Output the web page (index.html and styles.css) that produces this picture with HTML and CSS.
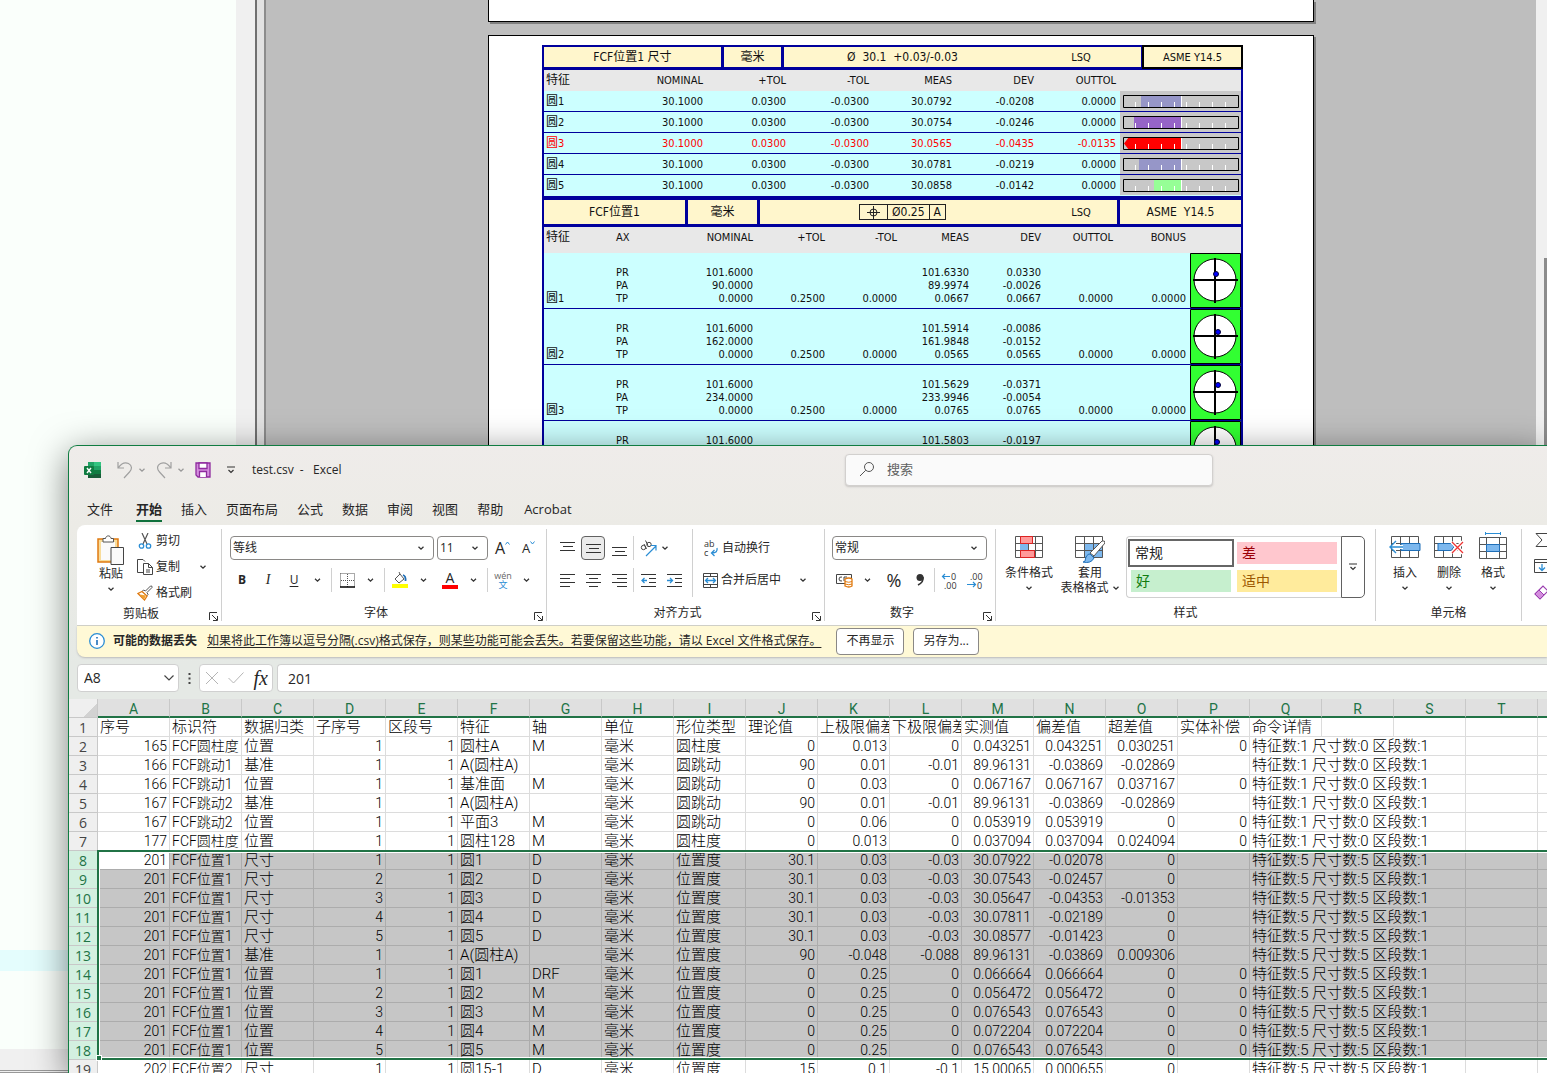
FILE: index.html
```html
<!DOCTYPE html>
<html lang="zh-CN">
<head>
<meta charset="utf-8">
<title>test.csv - Excel</title>
<link rel="stylesheet" href="styles.css">
</head>
<body>
<svg width="0" height="0" class="defs" aria-hidden="true">
  <symbol id="chev" viewBox="0 0 8 8"><path d="M1.5 2.8 4 5.2 6.500 2.800" fill="none" stroke="currentColor" stroke-width="1.3"/></symbol>
  <symbol id="ticks" viewBox="0 0 116 13"><path d="M12.500 7v5M25.500 7v5M38.500 7v5M51.500 7v5M58.500 0v12M63.500 7v5M76.500 7v5M89.500 7v5M102.500 7v5" stroke="#fff"/><path d="M.5.5h115v12H.5z" fill="none" stroke="#000"/></symbol>
  <symbol id="scope" viewBox="0 0 51 55"><path d="M.5.5h50v54H.5z" fill="#32ff32" stroke="#000"/><circle cx="25" cy="27" r="21" fill="#fff" stroke="#000"/><path d="M3 27h45M25 5v45" stroke="#000" stroke-width="2"/></symbol>
  <symbol id="launch" viewBox="0 0 9 9"><path d="M.5 8V.5H8M3 3l5 5M8.500 4v4.500H4" fill="none" stroke="#333"/></symbol>
</svg>

<main class="backdrop">
  <aside class="tree"><div class="tree-hit"></div><div class="tree-foot"></div></aside>
  <div class="gutter"></div>
  <section class="report">
    <div class="page page-prev"></div>
    <div class="page page-main">
      <div class="dim">
        <header class="title title-a"><h2>FCF位置1 尺寸</h2><span class="unit">毫米</span><div class="mid"><span class="spec">Ø&nbsp; 30.1&nbsp; +0.03/-0.03</span><span>LSQ</span></div><span class="std">ASME Y14.5</span></header>
        <table class="res res-a">
          <colgroup><col class="w80"><col class="w83"><col class="w83"><col class="w83"><col class="w83"><col class="w82"><col class="w82"><col class="w121"></colgroup>
          <thead><tr><th>特征<th>NOMINAL<th>+TOL<th>-TOL<th>MEAS<th>DEV<th>OUTTOL<th></thead>
          <tbody>
          <tr><td><i>圆</i>1<td>30.1000<td>0.0300<td>-0.0300<td>30.0792<td>-0.0208<td>0.0000<td><svg width="116" height="13"><path d="M18 0h40v13H18z" fill="#9696c8"/><use href="#ticks"/></svg>
          <tr><td><i>圆</i>2<td>30.1000<td>0.0300<td>-0.0300<td>30.0754<td>-0.0246<td>0.0000<td><svg width="116" height="13"><path d="M11 0h47v13H11z" fill="#9664c8"/><use href="#ticks"/></svg>
          <tr class="bad"><td><i>圆</i>3<td>30.1000<td>0.0300<td>-0.0300<td>30.0565<td>-0.0435<td>-0.0135<td><svg width="116" height="13"><path d="M1 6.500 6 0h52v13H6z" fill="#f00"/><use href="#ticks"/></svg>
          <tr><td><i>圆</i>4<td>30.1000<td>0.0300<td>-0.0300<td>30.0781<td>-0.0219<td>0.0000<td><svg width="116" height="13"><path d="M16 0h42v13H16z" fill="#9696c8"/><use href="#ticks"/></svg>
          <tr><td><i>圆</i>5<td>30.1000<td>0.0300<td>-0.0300<td>30.0858<td>-0.0142<td>0.0000<td><svg width="116" height="13"><path d="M31 0h27v13H31z" fill="#96ff96"/><use href="#ticks"/></svg>
          </tbody>
        </table>
        <header class="title title-b"><h2>FCF位置1</h2><span class="unit">毫米</span><div class="mid"><span class="frame"><b><svg width="13" height="13" viewBox="0 0 13 13"><path d="M0 6.500h13M6.500 0v13" stroke="#222"/><circle cx="6.500" cy="6.500" r="3.500" fill="none" stroke="#222"/></svg></b><b>Ø0.25</b><b>A</b></span><span>LSQ</span></div><span class="std">ASME&nbsp; Y14.5</span></header>
        <table class="res res-b">
          <colgroup><col class="w72"><col class="w70"><col class="w71"><col class="w72"><col class="w72"><col class="w72"><col class="w72"><col class="w72"><col class="w73"><col class="w51"></colgroup>
          <thead><tr><th>特征<th>AX<th>NOMINAL<th>+TOL<th>-TOL<th>MEAS<th>DEV<th>OUTTOL<th>BONUS<th></thead>
          <tbody>
          <tr><td><i>圆</i>1<td>PR<br>PA<br>TP<td>101.6000<br>90.0000<br>0.0000<td>0.2500<td>0.0000<td>101.6330<br>89.9974<br>0.0667<td>0.0330<br>-0.0026<br>0.0667<td>0.0000<td>0.0000<td><svg width="51" height="55"><use href="#scope"/><circle cx="26" cy="21" r="2.500" fill="#00f" stroke="#003"/></svg>
          <tr><td><i>圆</i>2<td>PR<br>PA<br>TP<td>101.6000<br>162.0000<br>0.0000<td>0.2500<td>0.0000<td>101.5914<br>161.9848<br>0.0565<td>-0.0086<br>-0.0152<br>0.0565<td>0.0000<td>0.0000<td><svg width="51" height="55"><use href="#scope"/><circle cx="28" cy="23" r="2.500" fill="#00f" stroke="#003"/></svg>
          <tr><td><i>圆</i>3<td>PR<br>PA<br>TP<td>101.6000<br>234.0000<br>0.0000<td>0.2500<td>0.0000<td>101.5629<br>233.9946<br>0.0765<td>-0.0371<br>-0.0054<br>0.0765<td>0.0000<td>0.0000<td><svg width="51" height="55"><use href="#scope"/><circle cx="28" cy="20" r="2.500" fill="#00f" stroke="#003"/></svg>
          <tr><td><i>圆</i>4<td>PR<br>PA<br>TP<td>101.6000<br>306.0000<br>0.0000<td>0.2500<td>0.0000<td>101.5803<br>306.0000<br>0.0722<td>-0.0197<br>0.0000<br>0.0722<td>0.0000<td>0.0000<td><svg width="51" height="55"><use href="#scope"/><circle cx="27" cy="21" r="2.500" fill="#00f" stroke="#003"/></svg>
          </tbody>
        </table>
      </div>
    </div>
  </section>
  <div class="rail"><div class="thumb"></div></div>
</main>

<section class="excel">
  <header class="bar">
    <div class="quick">
      <svg width="17" height="17" viewBox="0 0 17 17"><path d="M4 0h6v8H4z" fill="#21a366"/><path d="M10 0h7v4h-7z" fill="#33c481"/><path d="M10 4h7v4h-7z" fill="#21a366"/><path d="M4 8h6v8H4z" fill="#185c37"/><path d="M10 8h7v4h-7z" fill="#107c41"/><path d="M4 12h13v4H4z" fill="#185c37"/><rect y="4" width="10" height="9" rx="1" fill="#107c41"/><path d="m3 6 4 5M7 6l-4 5" stroke="#fff" stroke-width="1.400"/></svg>
      <button class="ic" aria-label="撤消"><svg width="16" height="18" viewBox="0 0 16 18"><path d="M1 1v6h6M1.500 6.500C4 3 8 1 11.500 2.500c4 2 3.500 6 1 8.500L7 17" fill="none" stroke="#a0a0a0" stroke-width="1.200"/></svg></button><svg class="c dim-c"><use href="#chev"/></svg>
      <button class="ic" aria-label="恢复"><svg width="16" height="18" viewBox="0 0 16 18"><path d="M15 1v6H9M14.500 6.500C12 3 8 1 4.500 2.500.5 4.500 1 8.500 3.500 11L9 17" fill="none" stroke="#a0a0a0" stroke-width="1.200"/></svg></button><svg class="c dim-c"><use href="#chev"/></svg>
      <button class="ic" aria-label="保存"><svg width="16" height="16" viewBox="0 0 16 16"><path d="M1 1h14v14H3l-2-2z" fill="#d48ede" stroke="#8e2a9e" stroke-width="1.300"/><path d="M4 1h8v5.500H4zM4.500 15V9.500h7V15" fill="#fff" stroke="#8e2a9e" stroke-width="1.300"/></svg></button>
      <button class="ic more" aria-label="自定义"><svg width="8" height="8" viewBox="0 0 8 8"><path d="M0 1h8M1.500 4 4 6.500 6.500 4" fill="none" stroke="#333" stroke-width="1.200"/></svg></button>
      <h1>test.csv&nbsp; -&nbsp;&nbsp; Excel</h1>
    </div>
    <label class="search"><svg width="16" height="16" viewBox="0 0 16 16"><circle cx="10" cy="6" r="4.500" fill="none" stroke="#555"/><path d="M6.800 9.200 1 15" stroke="#555"/></svg><input type="text" placeholder="搜索" aria-label="搜索"></label>
  </header>
  <nav class="tabs"><a href="#">文件</a><a href="#" class="on">开始</a><a href="#">插入</a><a href="#">页面布局</a><a href="#">公式</a><a href="#">数据</a><a href="#">审阅</a><a href="#">视图</a><a href="#">帮助</a><a href="#">Acrobat</a></nav>

  <div class="ribbon">
    <section class="group g-clip">
      <div class="body">
        <button class="big"><svg width="28" height="30" viewBox="0 0 28 30"><path d="M1 4h20v23H1z" fill="#f8dc9a" stroke="#e07a10" stroke-width="1.500"/><path d="M4 7h14v18H4z" fill="#fafafa"/><path d="M6 7V3.500h2.500c.5-3.500 5-3.500 5.500 0h2.500V7z" fill="#fff" stroke="#555"/><path d="M14 12.500h12.500v17H14z" fill="#fafafa" stroke="#444"/></svg><span>粘贴</span><svg class="c"><use href="#chev"/></svg></button>
        <div class="stack">
          <button class="row"><svg width="16" height="16" viewBox="0 0 16 16"><path d="m5 0 5 11M11 0 6 11" stroke="#555" stroke-width="1.200"/><circle cx="4.500" cy="13" r="2.200" fill="none" stroke="#2a8dd4" stroke-width="1.300"/><circle cx="11.500" cy="13" r="2.200" fill="none" stroke="#2a8dd4" stroke-width="1.300"/></svg>剪切</button>
          <button class="row"><svg width="16" height="16" viewBox="0 0 16 16"><path d="M6 13.500H.5V.5H6l2 2M6.500 4.500h5l4 4v7h-9zM11.500 4.500v4h4M9 11h4M9 13h4" fill="none" stroke="#444"/></svg>复制<svg class="c push"><use href="#chev"/></svg></button>
          <button class="row"><svg width="16" height="16" viewBox="0 0 16 16"><path d="m8.500 6 5-5q2-.5 1.500 1.500l-5 5 1 2-1.500 1.500-4.500-4.500L6.500 5z" fill="#fff" stroke="#555"/><path d="M5 6.500 1 8.500l6.500 6.500L10 11z" fill="#fff" stroke="#e07a10" stroke-width="1.300"/><path d="m3 9.500 6 1-2 4z" fill="#f0a030"/></svg>格式刷</button>
        </div>
      </div>
      <footer>剪贴板<svg class="l"><use href="#launch"/></svg></footer>
    </section>

    <section class="group g-font">
      <div class="body lines">
        <div class="tools t4"><span class="combo cw203"><select aria-label="字体"><option>等线</option></select><svg class="c"><use href="#chev"/></svg></span><span class="combo cw50"><select aria-label="字号"><option>11</option></select><svg class="c"><use href="#chev"/></svg></span><button class="ic grow">A<svg width="5" height="4" viewBox="0 0 5 4"><path d="M.5 3.500 2.500 1l2 2.500" fill="none" stroke="#2a8dd4"/></svg></button><button class="ic grow sm">A<svg width="5" height="4" viewBox="0 0 5 4"><path d="M.5.5l2 2.500 2-2.500" fill="none" stroke="#2a8dd4"/></svg></button></div>
        <div class="tools"><button class="ic"><b>B</b></button><button class="ic"><em>I</em></button><button class="ic"><u>U</u></button><svg class="c wide"><use href="#chev"/></svg><s></s>
          <button class="ic" aria-label="边框"><svg width="15" height="15" viewBox="0 0 15 15"><path d="M.5.5h14v14M.5.5v14M7.500 1v13M1 7.500h13" fill="none" stroke="#555" stroke-dasharray="1 1"/><path d="M0 14h15" stroke="#000" stroke-width="1.500"/></svg></button><svg class="c wide"><use href="#chev"/></svg><s></s>
          <button class="ic" aria-label="填充颜色"><svg width="16" height="16" viewBox="0 0 16 16"><path d="m3 7 5-5 4 5-5 4zM8 2 7 0" fill="#fff" stroke="#555"/><path d="M11 3q3 1 2.500 6" fill="none" stroke="#1f6fb8" stroke-width="1.800"/><path d="M0 12h16v4H0z" fill="#ff0"/></svg></button><svg class="c wide"><use href="#chev"/></svg>
          <button class="ic nudge" aria-label="字体颜色"><span class="fc">A</span></button><svg class="c wide"><use href="#chev"/></svg><s></s>
          <button class="ic wen"><span>wén</span><span>文</span></button><svg class="c wide"><use href="#chev"/></svg></div>
      </div>
      <footer>字体<svg class="l"><use href="#launch"/></svg></footer>
    </section>

    <section class="group g-align">
      <div class="body">
        <div class="lines left">
          <div class="tools"><button class="ic" aria-label="顶端对齐"><svg width="15" height="15" viewBox="0 0 15 15"><path d="M0 1.500h15M3 5.500h10M0 9.500h15" stroke="#333"/></svg></button><button class="ic pressed" aria-label="垂直居中"><svg width="15" height="15" viewBox="0 0 15 15"><path d="M0 3.500h15M3 7.500h10M0 11.500h15" stroke="#333"/></svg></button><button class="ic" aria-label="底端对齐"><svg width="15" height="15" viewBox="0 0 15 15"><path d="M0 6.500h15M3 10.500h10M0 14.500h15" stroke="#333"/></svg></button><s class="tight"></s><button class="ic" aria-label="方向"><svg width="17" height="17" viewBox="0 0 17 17"><circle cx="3.500" cy="7.500" r="2.200" fill="none" stroke="#444"/><circle cx="9" cy="4.500" r="2.200" fill="none" stroke="#444"/><path d="m4 4 2.500 5M5.500.5l2.500 5" fill="none" stroke="#444"/><path d="m6 16 10-10M11 5.500h5v5" fill="none" stroke="#2a8dd4" stroke-width="1.200"/></svg></button><svg class="c"><use href="#chev"/></svg></div>
          <div class="tools"><button class="ic" aria-label="左对齐"><svg width="15" height="15" viewBox="0 0 15 15"><path d="M0 1.500h15M0 5.500h10M0 9.500h15M0 13.500h10" stroke="#333"/></svg></button><button class="ic" aria-label="居中"><svg width="15" height="15" viewBox="0 0 15 15"><path d="M0 1.500h15M3 5.500h9M0 9.500h15M3 13.500h9" stroke="#333"/></svg></button><button class="ic" aria-label="右对齐"><svg width="15" height="15" viewBox="0 0 15 15"><path d="M0 1.500h15M5 5.500h10M0 9.500h15M5 13.500h10" stroke="#333"/></svg></button><s class="tight"></s><button class="ic" aria-label="减少缩进"><svg width="15" height="15" viewBox="0 0 15 15"><path d="M0 1.500h15M8 5.500h7M8 9.500h7M0 13.500h15" stroke="#333"/><path d="M6 7.500H1M3.500 5 1 7.500 3.500 10" fill="none" stroke="#2a8dd4" stroke-width="1.300"/></svg></button><button class="ic" aria-label="增加缩进"><svg width="15" height="15" viewBox="0 0 15 15"><path d="M0 1.500h15M8 5.500h7M8 9.500h7M0 13.500h15" stroke="#333"/><path d="M0 7.500h5M3 5l2.500 2.500L3 10" fill="none" stroke="#2a8dd4" stroke-width="1.300"/></svg></button></div>
        </div>
        <div class="lines right">
          <div class="tools"><button class="row"><svg width="16" height="18" viewBox="0 0 16 18"><text x="1" y="8" class="tiny">ab</text><text x="1" y="17" class="tiny">c</text><path d="M14 9q1 5-5 5M11.500 11 8.500 14l3 3" fill="none" stroke="#2a8dd4" stroke-width="1.300"/></svg>自动换行</button></div>
          <div class="tools"><button class="row"><svg width="15" height="15" viewBox="0 0 15 15"><path d="M.5.5h14v14H.5zM.5 3.500h14M.5 11.500h14M7.500.5v3M7.500 11.500v3" fill="none" stroke="#444"/><path d="M2.500 7.500h10M5 5 2.500 7.500 5 10M10 5l2.500 2.500L10 10" fill="none" stroke="#2a8dd4" stroke-width="1.300"/></svg>合并后居中</button><svg class="c far"><use href="#chev"/></svg></div>
        </div>
      </div>
      <footer>对齐方式<svg class="l"><use href="#launch"/></svg></footer>
    </section>

    <section class="group g-num">
      <div class="body lines">
        <div class="tools"><span class="combo cw154"><select aria-label="数字格式"><option>常规</option></select><svg class="c"><use href="#chev"/></svg></span></div>
        <div class="tools"><button class="ic" aria-label="会计格式"><svg width="17" height="15" viewBox="0 0 17 15"><path d="M.5 1.500h15v9H.5z" fill="#fff" stroke="#444"/><path d="M6 4Q3 3.500 3 6t3 2M8 8V4h3" fill="none" stroke="#444"/><path d="M9 6q4-2 7 0v7q-3 2-7 0z" fill="#fff" stroke="#e07a10" stroke-width="1.300"/><path d="M9 8.500q4 1.500 7 0M9 11q4 1.500 7 0" fill="none" stroke="#e07a10"/></svg></button><svg class="c wide"><use href="#chev"/></svg><button class="ic nudge pct">%</button><button class="ic" aria-label="千位分隔"><svg width="9" height="14" viewBox="0 0 9 14"><circle cx="4" cy="4.500" r="3.500" fill="#333"/><path d="M7 4q1 5-5 8" fill="none" stroke="#333" stroke-width="1.600"/></svg></button><s class="tight"></s><button class="ic" aria-label="增加小数位数"><svg width="17" height="17" viewBox="0 0 17 17"><text x="10" y="8" class="tiny">0</text><text x="3" y="17" class="tiny">.00</text><path d="M9 4.500H1.500M4 2 1.500 4.500 4 7" fill="none" stroke="#2a8dd4" stroke-width="1.200"/></svg></button><button class="ic" aria-label="减少小数位数"><svg width="17" height="17" viewBox="0 0 17 17"><text x="3" y="8" class="tiny">.00</text><text x="10" y="17" class="tiny">0</text><path d="M0 12.500h8.500M6 10l2.500 2.500L6 15" fill="none" stroke="#2a8dd4" stroke-width="1.200"/></svg></button></div>
      </div>
      <footer>数字<svg class="l"><use href="#launch"/></svg></footer>
    </section>

    <section class="group g-style">
      <div class="body">
        <button class="big"><svg width="28" height="23" viewBox="0 0 28 23"><path d="M.5.5h27v21H.5zM.5 7.500h27M.5 14.500h27M5.500 0v22M13.500 0v22M20.500 0v22" fill="none" stroke="#555"/><path d="M5.500.5h12v7h-12zM5.500 14.500h14v7h-14z" fill="#ff9a9a" stroke="#d22"/><path d="M5 8h8v6H5z" fill="#7db8ee"/></svg><span>条件格式</span><svg class="c"><use href="#chev"/></svg></button>
        <button class="big"><svg width="30" height="27" viewBox="0 0 30 27"><path d="M9 7.500h19v14H9z" fill="#7db8ee"/><path d="M.5.5h27v21H.5zM.5 7.500h27M.5 14.500h27M9.500 0v22M18.500 0v22" fill="none" stroke="#555"/><path d="M27 5q3-1 3 2L19 20l-4-3z" fill="#fff" stroke="#555"/><path d="M15 18q-4 0-5 7-1 1-2 1 8 2 11-4z" fill="#7db8ee" stroke="#1f6fb8"/></svg><span>套用</span><span class="two">表格格式<svg class="c"><use href="#chev"/></svg></span></button>
        <div class="gallery"><div class="chips"><button class="chip normal">常规</button><button class="chip poor">差</button><button class="chip good">好</button><button class="chip mild">适中</button></div><button class="drop" aria-label="其他"><svg width="8" height="8" viewBox="0 0 8 8"><path d="M0 1h8M1.500 4 4 6.500 6.500 4" fill="none" stroke="#333" stroke-width="1.200"/></svg></button></div>
      </div>
      <footer>样式</footer>
    </section>

    <section class="group g-cells">
      <div class="body">
        <button class="big"><svg width="32" height="23" viewBox="0 0 32 23"><path d="M2.500.5h27v21h-27zM2.500 7.500h27M2.500 14.500h27M11.500 0v22M20.500 0v22" fill="none" stroke="#555"/><path d="M12 7.500h19v7H12z" fill="#7db8ee" stroke="#1f6fb8"/><path d="M14 9v4H7v3l-6-5 6-6v4z" fill="#fff"/><path d="M14 11H1M7 5 1 11l6 6" fill="none" stroke="#2a8dd4" stroke-width="1.400"/></svg><span>插入</span><svg class="c"><use href="#chev"/></svg></button>
        <button class="big"><svg width="30" height="23" viewBox="0 0 30 23"><path d="M.5.5h27v21H.5zM.5 7.500h27M.5 14.500h27M9.500 0v22M18.500 0v22" fill="none" stroke="#555"/><path d="M4 7.500h13l3 3.500-3 3.500H4z" fill="#7db8ee" stroke="#1f6fb8"/><path d="m18 6 11 11M29 6 18 17" stroke="#fff" stroke-width="4"/><path d="m18 6 11 11M29 6 18 17" stroke="#e33" stroke-width="1.300"/></svg><span>删除</span><svg class="c"><use href="#chev"/></svg></button>
        <button class="big fmt"><svg width="28" height="28" viewBox="0 0 28 28"><path d="M6 1.500h16M6.500 0v3M21.500 0v3" stroke="#2a8dd4"/><path d="M.5 5.500h27v21H.5zM.5 12.500h27M.5 19.500h27M7.500 5v22M20.500 5v22" fill="none" stroke="#555"/><path d="M7.500 12.500h13v7h-13z" fill="#7db8ee" stroke="#1f6fb8"/></svg><span>格式</span><svg class="c"><use href="#chev"/></svg></button>
      </div>
      <footer>单元格</footer>
    </section>

    <section class="group g-edit">
      <div class="stack">
        <button class="row" aria-label="自动求和"><svg width="16" height="16" viewBox="0 0 16 16"><path d="M14 4V1.500H2L8 8l-6 6.500h12V12" fill="none" stroke="#444"/></svg></button>
        <button class="row" aria-label="填充"><svg width="16" height="16" viewBox="0 0 16 16"><path d="M.5 1.500h15v13H.5zM.5 4.500h15" fill="none" stroke="#444"/><path d="M8 6v6M5 9.500l3 3 3-3" fill="none" stroke="#2a8dd4" stroke-width="1.300"/></svg></button>
        <button class="row" aria-label="清除"><svg width="16" height="16" viewBox="0 0 16 16"><path d="m1 10 8-8 5 5-8 8z" fill="#fff" stroke="#9b3fb0" stroke-width="1.200"/><path d="m1 10 4-4 5 5-4 4z" fill="#d48ede" stroke="#9b3fb0"/></svg></button>
      </div>
    </section>
  </div>

  <div class="notice"><svg width="16" height="16" viewBox="0 0 16 16"><circle cx="8" cy="8" r="7.300" fill="#fff" stroke="#2a8dd4" stroke-width="1.300"/><path d="M8 7v5M8 4v1.500" stroke="#1f6fb8" stroke-width="1.600"/></svg><strong>可能的数据丢失</strong><a href="#">如果将此工作簿以逗号分隔(.csv)格式保存，则某些功能可能会丢失。若要保留这些功能，请以 Excel 文件格式保存。</a><button>不再显示</button><button>另存为...</button></div>

  <div class="formula">
    <label class="name"><input type="text" value="A8" aria-label="名称框"><svg width="10" height="6" viewBox="0 0 10 6"><path d="m.5.5 4.500 4.500L9.500.5" fill="none" stroke="#444" stroke-width="1.200"/></svg></label>
    <svg width="3" height="11" viewBox="0 0 3 11"><path d="M.5 0h2v2h-2zM.5 4.500h2v2h-2zM.5 9h2v2h-2z" fill="#444"/></svg>
    <div class="fx"><svg width="12" height="12" viewBox="0 0 12 12"><path d="m0 0 12 12M12 0 0 12" stroke="#b5b5b5"/></svg><svg width="16" height="12" viewBox="0 0 16 12"><path d="m.5 6 5 5L15.500.5" fill="none" stroke="#b5b5b5"/></svg><em>fx</em></div>
    <input class="entry" type="text" value="201" aria-label="编辑栏">
  </div>

  <div class="sheet">
    <table>
      <thead><tr><th class="corner"><th>A<th>B<th>C<th>D<th>E<th>F<th>G<th>H<th>I<th>J<th>K<th>L<th>M<th>N<th>O<th>P<th>Q<th>R<th>S<th>T<th></thead>
      <tbody class="names">
      <tr><th>1<td>序号<td>标识符<td>数据归类<td>子序号<td>区段号<td>特征<td>轴<td>单位<td>形位类型<td>理论值<td>上极限偏差<td>下极限偏差<td>实测值<td>偏差值<td>超差值<td>实体补偿<td>命令详情<td><td><td><td>
      </tbody>
      <tbody class="data">
      <tr><th>2<td>165<td>FCF圆柱度<td>位置<td>1<td>1<td>圆柱A<td>M<td>毫米<td>圆柱度<td>0<td>0.013<td>0<td>0.043251<td>0.043251<td>0.030251<td>0<td colspan="3">特征数:1 尺寸数:0 区段数:1<td><td>
      <tr><th>3<td>166<td>FCF跳动1<td>基准<td>1<td>1<td>A(圆柱A)<td><td>毫米<td>圆跳动<td>90<td>0.01<td>-0.01<td>89.96131<td>-0.03869<td>-0.02869<td><td colspan="3">特征数:1 尺寸数:0 区段数:1<td><td>
      <tr><th>4<td>166<td>FCF跳动1<td>位置<td>1<td>1<td>基准面<td>M<td>毫米<td>圆跳动<td>0<td>0.03<td>0<td>0.067167<td>0.067167<td>0.037167<td>0<td colspan="3">特征数:1 尺寸数:0 区段数:1<td><td>
      <tr><th>5<td>167<td>FCF跳动2<td>基准<td>1<td>1<td>A(圆柱A)<td><td>毫米<td>圆跳动<td>90<td>0.01<td>-0.01<td>89.96131<td>-0.03869<td>-0.02869<td><td colspan="3">特征数:1 尺寸数:0 区段数:1<td><td>
      <tr><th>6<td>167<td>FCF跳动2<td>位置<td>1<td>1<td>平面3<td>M<td>毫米<td>圆跳动<td>0<td>0.06<td>0<td>0.053919<td>0.053919<td>0<td>0<td colspan="3">特征数:1 尺寸数:0 区段数:1<td><td>
      <tr><th>7<td>177<td>FCF圆柱度<td>位置<td>1<td>1<td>圆柱128<td>M<td>毫米<td>圆柱度<td>0<td>0.013<td>0<td>0.037094<td>0.037094<td>0.024094<td>0<td colspan="3">特征数:1 尺寸数:0 区段数:1<td><td>
      </tbody>
      <tbody class="data sel">
      <tr><th>8<td class="active">201<td>FCF位置1<td>尺寸<td>1<td>1<td>圆1<td>D<td>毫米<td>位置度<td>30.1<td>0.03<td>-0.03<td>30.07922<td>-0.02078<td>0<td><td colspan="3">特征数:5 尺寸数:5 区段数:1<td><td>
      <tr><th>9<td>201<td>FCF位置1<td>尺寸<td>2<td>1<td>圆2<td>D<td>毫米<td>位置度<td>30.1<td>0.03<td>-0.03<td>30.07543<td>-0.02457<td>0<td><td colspan="3">特征数:5 尺寸数:5 区段数:1<td><td>
      <tr><th>10<td>201<td>FCF位置1<td>尺寸<td>3<td>1<td>圆3<td>D<td>毫米<td>位置度<td>30.1<td>0.03<td>-0.03<td>30.05647<td>-0.04353<td>-0.01353<td><td colspan="3">特征数:5 尺寸数:5 区段数:1<td><td>
      <tr><th>11<td>201<td>FCF位置1<td>尺寸<td>4<td>1<td>圆4<td>D<td>毫米<td>位置度<td>30.1<td>0.03<td>-0.03<td>30.07811<td>-0.02189<td>0<td><td colspan="3">特征数:5 尺寸数:5 区段数:1<td><td>
      <tr><th>12<td>201<td>FCF位置1<td>尺寸<td>5<td>1<td>圆5<td>D<td>毫米<td>位置度<td>30.1<td>0.03<td>-0.03<td>30.08577<td>-0.01423<td>0<td><td colspan="3">特征数:5 尺寸数:5 区段数:1<td><td>
      <tr><th>13<td>201<td>FCF位置1<td>基准<td>1<td>1<td>A(圆柱A)<td><td>毫米<td>位置度<td>90<td>-0.048<td>-0.088<td>89.96131<td>-0.03869<td>0.009306<td><td colspan="3">特征数:5 尺寸数:5 区段数:1<td><td>
      <tr><th>14<td>201<td>FCF位置1<td>位置<td>1<td>1<td>圆1<td>DRF<td>毫米<td>位置度<td>0<td>0.25<td>0<td>0.066664<td>0.066664<td>0<td>0<td colspan="3">特征数:5 尺寸数:5 区段数:1<td><td>
      <tr><th>15<td>201<td>FCF位置1<td>位置<td>2<td>1<td>圆2<td>M<td>毫米<td>位置度<td>0<td>0.25<td>0<td>0.056472<td>0.056472<td>0<td>0<td colspan="3">特征数:5 尺寸数:5 区段数:1<td><td>
      <tr><th>16<td>201<td>FCF位置1<td>位置<td>3<td>1<td>圆3<td>M<td>毫米<td>位置度<td>0<td>0.25<td>0<td>0.076543<td>0.076543<td>0<td>0<td colspan="3">特征数:5 尺寸数:5 区段数:1<td><td>
      <tr><th>17<td>201<td>FCF位置1<td>位置<td>4<td>1<td>圆4<td>M<td>毫米<td>位置度<td>0<td>0.25<td>0<td>0.072204<td>0.072204<td>0<td>0<td colspan="3">特征数:5 尺寸数:5 区段数:1<td><td>
      <tr><th>18<td>201<td>FCF位置1<td>位置<td>5<td>1<td>圆5<td>M<td>毫米<td>位置度<td>0<td>0.25<td>0<td>0.076543<td>0.076543<td>0<td>0<td colspan="3">特征数:5 尺寸数:5 区段数:1<td><td>
      </tbody>
      <tbody class="data">
      <tr><th>19<td>202<td>FCF位置2<td>尺寸<td>1<td>1<td>圆15-1<td>D<td>毫米<td>位置度<td>15<td>0.1<td>-0.1<td>15.00065<td>0.000655<td>0<td><td colspan="3">特征数:5 尺寸数:5 区段数:1<td><td>
      </tbody>
    </table>
    <div class="marquee"><div class="handle"></div></div>
  </div>
</section>
</body>
</html>
```
FILE: styles.css
```css
* { box-sizing: border-box; }
body { margin: 0; height: 100vh; overflow: hidden; position: relative; font: 12px/16px "Open Sans", "Noto Sans CJK SC", sans-serif; color: #262626; }
.defs { position: absolute; }
svg { display: block; flex: none; }
button, input, select { font: inherit; color: inherit; margin: 0; }
button { background: none; border: 0; padding: 0; }
h1, h2 { margin: 0; font-size: inherit; font-weight: 400; }

/* measuring program behind the workbook */
.backdrop { display: flex; height: 100%; background: #bebebe; }
.tree { flex: 0 0 236px; background: #fafffb; display: flex; flex-direction: column; justify-content: flex-end; }
.tree-hit { height: 21px; background: #e4fdfd; margin-bottom: 78px; }
.tree-foot { height: 24px; background: #f0f0f0; border-bottom: 3px double #999; }
.gutter { flex: 0 0 30px; background: #f0f0f0; border-right: 2px solid #8c8c8c; display: flex; justify-content: flex-end; }
.gutter::before { content: ""; width: 7px; border-left: 2px solid #707070; background: #e2e2e2; }
.report { flex: 1; min-width: 0; display: flex; flex-direction: column; align-items: center; overflow: hidden; }
.rail { flex: 0 0 11px; background: #f0f0f0; display: flex; align-items: flex-end; justify-content: flex-end; }
.thumb { width: 3px; height: 76%; background: #8c8c8c; }
.page { flex: none; width: 826px; background: #fff; border: 1px solid #000; box-shadow: 2px 2px 0 #808080; }
.page-prev { height: 22px; border-top: 0; margin-bottom: 13px; }
.page-main { padding: 9px 70px 600px 53px; }
.dim { border: 2px solid #00009c; font: 11px/13px "DejaVu Sans Condensed", "Noto Sans CJK SC", sans-serif; color: #111; }
.title { display: flex; gap: 3px; background: #00009c; text-align: center; border-bottom: 3px solid #00009c; }
.title > * { background: #fff6cc; display: flex; align-items: center; justify-content: center; }
.title h2, .unit { font-size: 12px; }
.title .mid { flex: 1; display: grid; justify-items: center; }
.title-a { height: 23px; }
.title-a h2 { width: 177px; }
.title-a .unit { width: 57px; }
.title-a .mid { grid-template-columns: 237px 1fr; }
.title-a .std { width: 97px; outline: 2px solid #000; }
.spec { font-size: 12px; }
.title-b { height: 31px; border-top: 4px solid #00009c; }
.title-b h2 { width: 141px; }
.title-b .unit { width: 69px; }
.title-b .mid { grid-template-columns: 285px 1fr; }
.title-b .std { width: 121px; font-size: 12px; }
.frame { display: flex; border: 1px solid #222; height: 16px; font-size: 12px; }
.frame b { font-weight: 400; padding: 0 4px; border-right: 1px solid #222; display: flex; align-items: center; }
.frame b:first-child { padding: 0 7px; }
.frame b:last-child { border: 0; }
.res { table-layout: fixed; width: 100%; border-collapse: separate; border-spacing: 0; }
.res th { font-weight: 400; background: #e8e8e8; vertical-align: top; }
.res th, .res td { text-align: right; padding: 0 4px 0 0; white-space: nowrap; }
.res th:first-child, .res td:first-child { text-align: left; padding-left: 2px; }
.res th:first-child { font-size: 12px; }
.res td { background: #ccffff; border-bottom: 1px solid #00009c; vertical-align: bottom; }
.res tbody tr:last-child td { border-bottom-color: #ccffff; }
.res i { font-style: normal; font-size: 12px; }
.res-a th { height: 21px; padding-top: 4px; }
.res-a td { height: 21px; padding-bottom: 3px; }
.res-a td:last-child { background: #c8c8c8; vertical-align: middle; padding: 0 0 0 3px; }
.bad { color: #f00; }
.res-b th { height: 26px; padding-top: 4px; }
.res-b td { height: 56px; padding-bottom: 3px; }
.res-b th:nth-child(2), .res-b td:nth-child(2) { text-align: left; }
.res-b td:last-child { padding: 0; }
.w51 { width: 51px; } .w70 { width: 70px; } .w71 { width: 71px; } .w72 { width: 72px; } .w73 { width: 73px; }
.w80 { width: 80px; } .w82 { width: 82px; } .w83 { width: 83px; } .w121 { width: 121px; }

/* workbook window */
.excel { position: absolute; left: 68px; right: 0; top: 445px; bottom: 0; display: flex; flex-direction: column; overflow: hidden; border: 1px solid #107c41; border-width: 1px 0 0 1px; border-radius: 9px 0 0 0; background: linear-gradient(#efecea, #ecebe6 80px, #e5e9e5 220px); box-shadow: 0 8px 36px rgba(0, 0, 0, .5); }
.bar { flex: none; display: flex; height: 48px; padding-top: 8px; }
.quick { flex: 0 0 776px; height: 32px; display: flex; align-items: center; padding-left: 15px; }
.quick .ic { margin-left: 5px; }
.quick > svg:first-child { margin-right: 6px; }
.quick .more { margin: 0 8px 0 2px; }
.quick h1 { font-size: 12px; }
.search { flex: 0 1 368px; height: 32px; display: flex; align-items: center; gap: 12px; padding: 0 13px 2px; background: #fafafa; border: 1px solid #d2d0ce; border-radius: 4px; box-shadow: 0 1px 2px #c8c6c4; }
.search input { border: 0; background: none; outline: 0; flex: 1; min-width: 0; padding: 0; font-size: 13px; }
.search input::placeholder { color: #616161; opacity: 1; }
.tabs { flex: none; display: flex; gap: 19px; height: 31px; padding: 5px 0 0 18px; font-size: 13px; line-height: 20px; }
.tabs a { color: inherit; text-decoration: none; white-space: nowrap; height: 23px; }
.tabs a:nth-child(2) { margin-left: 4px; }
.tabs a:last-child { margin-left: 2px; }
.tabs .on { font-weight: 700; border-bottom: 2px solid #0f703b; }
.ribbon { flex: none; display: flex; height: 101px; margin-left: 8px; background: #fff; border-radius: 8px 0 0 0; border-bottom: 1px solid #d0d0c8; overflow: hidden; }
.group { flex: none; display: flex; flex-direction: column; margin: 4px 0; position: relative; border-right: 1px solid #d0d0d0; }
.body { display: flex; height: 78px; }
.group footer { display: flex; justify-content: center; line-height: 16px; padding-right: 16px; }
.g-style footer, .g-cells footer { padding-right: 0; }
.l { width: 9px; height: 9px; position: absolute; right: 3px; bottom: 0; }
.g-clip { width: 145px; } .g-font { width: 325px; } .g-align { width: 278px; } .g-num { width: 171px; }
.g-style { width: 380px; } .g-cells { width: 146px; } .g-edit { width: 60px; padding-left: 12px; }
.g-clip .body { padding-left: 12px; }
.g-style .body { padding-left: 1px; }
.g-cells .body { padding-left: 7px; }
.c { width: 8px; height: 8px; color: #333; }
.c.wide { width: 21px; }
.c.far { margin-left: 18px; }
.dim-c { color: #999; }
.big { display: flex; flex-direction: column; align-items: center; width: 44px; padding-top: 6px; white-space: nowrap; }
.big > svg:first-child { height: 30px; margin-bottom: 1px; }
.g-style .big { width: 64px; }
.g-style .big + .big { width: 58px; }
.big > svg[height="23"]:first-child { height: 23px; margin: 1px 0 6px; }
.big > svg[height="27"]:first-child { height: 27px; margin: 1px 0 2px; }
.big > svg[height="28"]:first-child { height: 28px; margin: -3px 0 5px; }
.big .c { margin-top: 3px; }
.two { display: flex; gap: 3px; line-height: 14px; }
.stack { display: flex; flex-direction: column; margin: -1px 0 0 4px; }
.g-edit .stack { margin: -2px 0 0; }
.stack .row { height: 26px; }
.g-clip .stack { width: 70px; }
.row { display: flex; align-items: center; gap: 3px; white-space: nowrap; }
.row .push { margin-left: auto; }
.lines { flex-direction: column; display: flex; padding: 4px 0 0 7px; gap: 2px; }
.tools { display: flex; align-items: center; height: 30px; }
.t4 { gap: 3px; }
.ic { width: 26px; height: 24px; display: flex; align-items: center; justify-content: center; flex: none; }
.ic b { font-weight: 700; } .ic em { font-family: "Liberation Serif", serif; font-size: 14px; }
.ic u { text-underline-offset: 2px; }
.nudge { margin-left: 3px; }
.pct { font-size: 18px; }
.pressed { border: 1px solid #616161; border-radius: 4px; background: #ebebeb; width: 24px; margin: 0 1px; }
s { width: 6px; height: 24px; background: linear-gradient(#d0d0d0, #d0d0d0) center / 1px 100% no-repeat; }
s.tight { width: 3px; }
.grow { font-size: 16px; align-items: center; width: 23px; }
.grow svg { margin-bottom: 10px; }
.grow.sm { font-size: 13px; }
.fc { font-size: 14px; line-height: 14px; border-bottom: 4px solid #f00; width: 16px; }
.wen { flex-direction: column; font-size: 9px; line-height: 9px; color: #666; }
.wen span + span { color: #2a8dd4; }
.tiny { font: 9px "Open Sans", sans-serif; fill: #333; }
.combo { display: flex; align-items: center; border: 1px solid #8a8886; border-radius: 4px; height: 24px; padding: 0 8px 0 2px; background: #fff; }
.combo select { appearance: none; border: 0; background: none; flex: 1; min-width: 0; padding: 0; outline: 0; }
.cw203 { width: 204px; margin-left: 1px; } .cw50 { width: 51px; } .cw154 { width: 155px; margin-left: 1px; }
.g-num .lines { padding-left: 6px; }
.g-align .left { width: 146px; border-right: 1px solid #d0d0d0; height: 68px; }
.g-align .right { padding-left: 10px; }
.gallery { display: flex; margin-top: 7px; margin-left: 7px; height: 62px; }
.chips { display: grid; grid-template-columns: 106px 100px; gap: 4px 3px; align-content: start; padding: 2px 4px 0 1px; border: 1px solid #d0d0d0; border-right: 0; border-radius: 4px 0 0 4px; }
.chip { font-size: 14px; line-height: 18px; text-align: left; padding: 0 5px; height: 22px; margin: 3px 0 0; }
.chip.normal { border: 2px solid #666; height: 28px; margin: 0 0 -3px; }
.chip.poor { background: #ffc7ce; color: #9c0006; }
.chip.good { background: #c6efce; color: #107c10; margin: 2px 3px 0; }
.chip.mild { background: #ffeb9c; color: #9c5700; margin-top: 2px; }
.drop { width: 24px; border: 1px solid #616161; border-radius: 0 5px 5px 0; display: flex; align-items: center; justify-content: center; }

.notice { flex: none; display: flex; align-items: center; height: 31px; margin-left: 8px; padding: 0 0 1px 12px; background: #fff9d6; border-radius: 0 0 0 8px; box-shadow: 0 1px 2px #bbb; white-space: nowrap; }
.notice strong { margin: 0 10px 0 8px; }
.notice a { color: inherit; text-underline-offset: 2px; margin-right: 15px; }
.notice button { border: 1px solid #8a8886; border-radius: 4px; background: #fff; height: 27px; padding: 0 9px; margin-right: 9px; }
.formula { flex: none; display: flex; align-items: center; height: 42px; padding: 0 0 0 8px; font-size: 14px; }
.name, .fx, .entry { height: 28px; background: #fff; border: 1px solid #d0d0d0; border-radius: 4px; display: flex; align-items: center; }
.name { width: 102px; padding: 0 4px 0 6px; margin-right: 9px; }
.name input { flex: 1; min-width: 0; border: 0; padding: 0; background: none; outline: 0; }
.fx { width: 74px; margin: 0 4px 0 8px; padding: 0 4px 0 6px; justify-content: space-between; }
.fx em { font: italic 20px/20px "Liberation Serif", serif; }
.entry { flex: 1; min-width: 0; border-right: 0; border-radius: 4px 0 0 4px; padding: 0 0 0 10px; outline: 0; }

.sheet { flex: 1; position: relative; overflow: hidden; background: #fff; font: 300 15px/17px Roboto, "Noto Sans CJK SC", sans-serif; color: #000; }
.sheet table { table-layout: fixed; width: 1541px; border-collapse: separate; border-spacing: 0; }
.sheet th { font: 14px/17px "Open Sans", sans-serif; color: #444; background: #efefef; border: 1px solid #c8c8c8; border-width: 0 1px 1px 0; height: 19px; padding: 1px 0 0; }
.sheet thead th { width: 72px; background: #e0e0e0; color: #217346; border-bottom: 2px solid #217346; line-height: 14px; padding-top: 3px; font-family: Roboto, sans-serif; }
.sheet thead .corner { width: 29px; border-bottom: 1px solid #c8c8c8; background: linear-gradient(135deg, #efefef 70%, #d2d2d2 70%); }
.sheet td { height: 19px; padding: 1px 2px 0; border: 1px solid #dcdcdc; border-width: 0 1px 1px 0; overflow: hidden; white-space: nowrap; }
.data td:nth-child(3) { font-size: 14px; }
.data td:nth-child(2), .data td:nth-child(5), .data td:nth-child(6), .data td:nth-child(n+11):nth-child(-n+17) { text-align: right; font-size: 14px; }
.sheet .sel th { background: #d3f0e0; color: #217346; }
.sheet .sel td { background: #c6c6c6; border-color: #acacac; }
.sheet .sel .active { background: #fff; }
.marquee { position: absolute; left: 28px; right: 0; top: 151px; height: 210px; border: 2px solid #217346; border-right: 0; box-shadow: inset 1px 1px 0 #fff, inset 0 -1px 0 #fff; pointer-events: none; }
.handle { position: absolute; left: -3px; bottom: -3px; width: 6px; height: 6px; background: #217346; border: 1px solid #fff; }
```
